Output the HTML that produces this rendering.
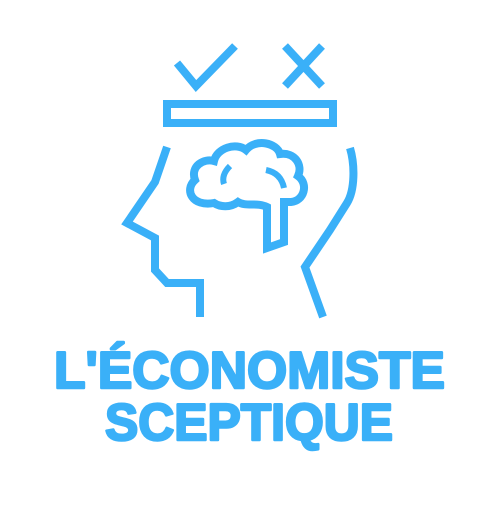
<!DOCTYPE html>
<html><head><style>html,body{margin:0;padding:0;background:#fff;}</style></head>
<body>
<svg width="500" height="500" viewBox="0 0 500 500" xmlns="http://www.w3.org/2000/svg">
<g fill="none" stroke="#3AB0F8" stroke-width="8" stroke-linejoin="miter">
<polyline points="177,63 196,86 235,46"/>
<line x1="285" y1="46" x2="322" y2="86"/>
<line x1="322" y1="46" x2="285" y2="86"/>
<rect x="167" y="104" width="166" height="19" stroke-width="8"/>
<polyline points="167,147 155,182 127,223 155,238 155,270 167,283 200,283 200,317"/>
<path d="M350 148 C355 165 355 190 347 203 L330 230 L305 267 L323 317"/>
<path d="M214 203 C192 207 184 190 195 180 C190 166 204 158 214 161 C217 148 236 142 246 150 C256 138 277 143 280 154 C295 152 303 165 298 176 C309 184 304 201 291 202 L284 202 L284 242 L267 248 L267 207 C257 202 246 207 238 202 C230 208 220 207 214 203 Z"/>
<path d="M230 166 C224 172 222 178 224 184" stroke-width="6"/>
<path d="M266 170 C276 172 282 178 284 188" stroke-width="6"/>
</g>
<g fill="#3AB0F8" stroke="#3AB0F8" stroke-width="2.5" stroke-linejoin="round" font-family="Liberation Sans, sans-serif" font-weight="bold">
<text x="54" y="388" font-size="52" textLength="391" lengthAdjust="spacingAndGlyphs">L'ÉCONOMISTE</text>
<text x="105" y="440" font-size="52" textLength="288" lengthAdjust="spacingAndGlyphs">SCEPTIQUE</text>
</g>
</svg>
</body></html>
